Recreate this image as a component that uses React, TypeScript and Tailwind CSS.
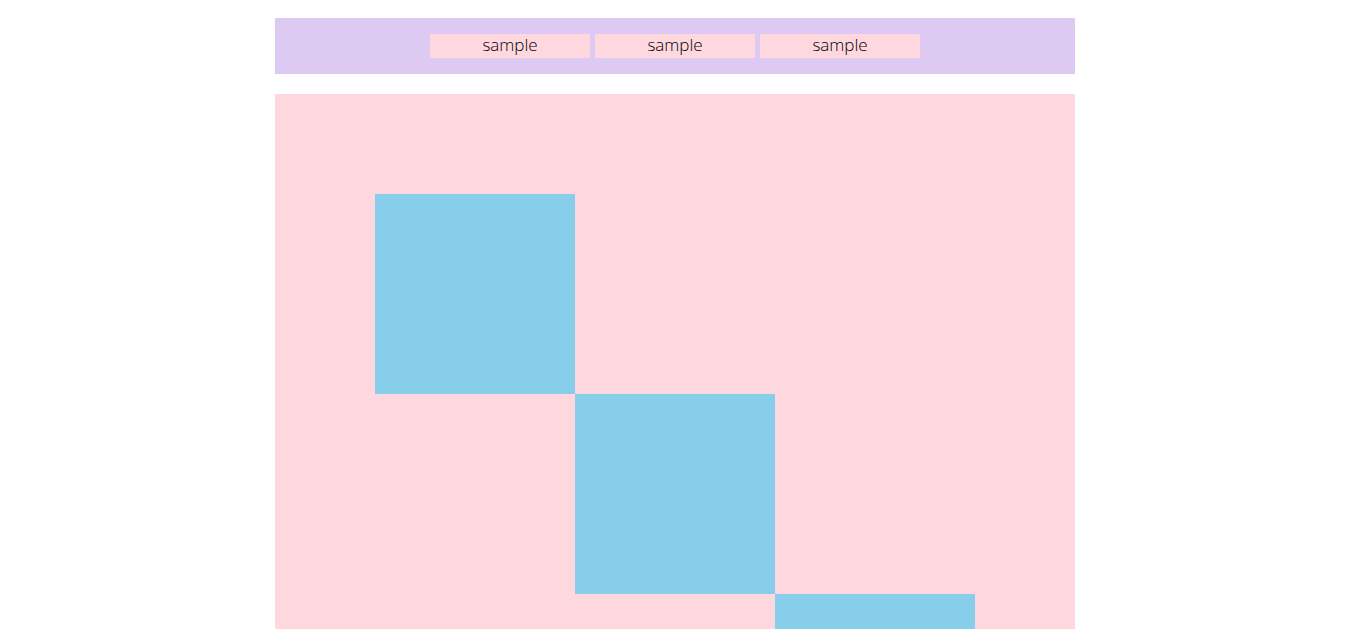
const menu = ["sample", "sample", "sample"];

export default function App() {
  return (
    <div className="bg-white pt-[18px] pl-1 font-['Open_Sans','Noto_Sans',sans-serif] text-[17px] font-light text-black">
      <nav className="mx-auto max-w-[800px] bg-[#dccaf3] py-4">
        <ul className="flex justify-center gap-[5px]">
          {menu.map((label, i) => (
            <li key={i} className="w-40">
              <a href="#" className="block bg-[#ffd7df] pb-0.5 text-center leading-[22px]">
                {label}
              </a>
            </li>
          ))}
        </ul>
      </nav>
      <main className="mx-auto mt-5 grid max-w-[800px] grid-cols-3 bg-[#ffd7df] p-[100px]">
        <div className="col-start-1 row-start-1 aspect-square bg-[#87ceeb]" />
        <div className="col-start-2 row-start-2 aspect-square bg-[#87ceeb]" />
        <div className="col-start-3 row-start-3 aspect-square bg-[#87ceeb]" />
      </main>
    </div>
  );
}
